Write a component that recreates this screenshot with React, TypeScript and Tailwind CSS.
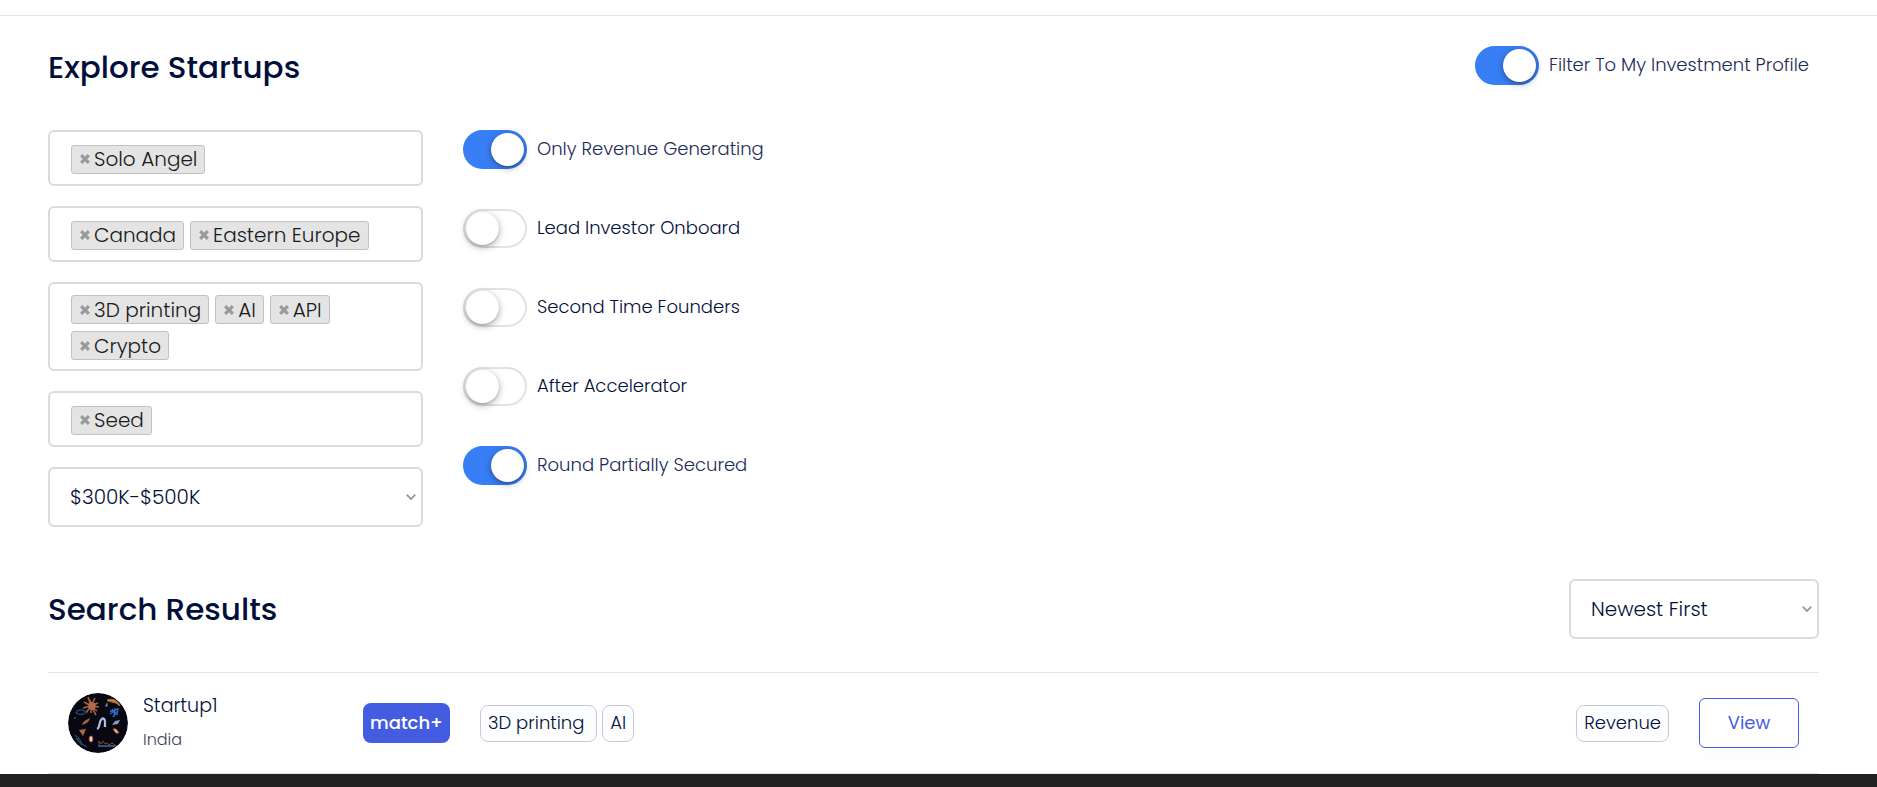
import React, { useId, useState } from "react";
import clsx from "clsx";

type Filter = { label: string; tags: string[] };

const initialFilters: Filter[] = [
  { label: "Investor type", tags: ["Solo Angel"] },
  { label: "Region", tags: ["Canada", "Eastern Europe"] },
  { label: "Industry", tags: ["3D printing", "AI", "API", "Crypto"] },
  { label: "Stage", tags: ["Seed"] },
];

const switches = [
  { label: "Only Revenue Generating", on: true },
  { label: "Lead Investor Onboard", on: false },
  { label: "Second Time Founders", on: false },
  { label: "After Accelerator", on: false },
  { label: "Round Partially Secured", on: true },
];

const startups = [
  {
    name: "Startup1",
    country: "India",
    match: "match+",
    tags: ["3D printing ", "AI"],
    status: "Revenue",
  },
];

// iOS style switch with its label
function Toggle({ label, defaultOn }: { label: string; defaultOn: boolean }) {
  const [on, setOn] = useState(defaultOn);
  const id = useId();

  return (
    <div className="flex items-center gap-2.5">
      <label
        htmlFor={id}
        className={clsx(
          "relative flex h-[39px] w-16 shrink-0 cursor-pointer items-center rounded-full border-2 transition",
          on ? "justify-end border-[#387ef5] bg-[#387ef5]" : "border-[#e2e2e4] bg-white"
        )}
      >
        <input
          id={id}
          type="checkbox"
          className="sr-only"
          checked={on}
          onChange={(e) => setOn(e.target.checked)}
        />
        <span className="mx-px size-[33px] rounded-full bg-white shadow-[0_2px_7px_rgba(0,0,0,0.35),0_1px_1px_rgba(0,0,0,0.15)]" />
      </label>
      <label
        htmlFor={id}
        className={clsx("cursor-pointer pb-0.5 text-lg font-light", on ? "text-[#1c2a58]" : "text-[#020f3a]")}
      >
        {label}
      </label>
    </div>
  );
}

function TagBox({ label, tags, onRemove }: Filter & { onRemove: (tag: string) => void }) {
  return (
    <div
      role="group"
      aria-label={label}
      className="flex min-h-14 flex-wrap content-center gap-x-1.5 gap-y-[7px] rounded-md border-2 border-[#d8dbe2] bg-white px-[21px] pt-[11px] pb-[9px]"
    >
      {tags.map((tag) => (
        <span
          key={tag}
          className="flex h-[29px] items-center gap-1 rounded-[3px] border border-[#c2c2c2] bg-[#e4e4e4] pr-[7px] pl-2 text-xl font-light text-[#1a1a1a]"
        >
          <button type="button" aria-label={`Remove ${tag}`} onClick={() => onRemove(tag)}>
            <svg viewBox="0 0 10 10" className="size-2.5" stroke="#999" strokeWidth="3.2">
              <path d="m1.2 1.2 7.6 7.6M8.8 1.2 1.2 8.8" />
            </svg>
          </button>
          {tag}
        </span>
      ))}
    </div>
  );
}

function Select({ label, options }: { label: string; options: string[] }) {
  return (
    <div className="relative">
      <select
        aria-label={label}
        className="h-15 w-full appearance-none rounded-md border-2 border-[#d8dbe2] bg-white pr-8 pl-5 text-xl font-light text-[#020f3a]"
      >
        {options.map((option) => (
          <option key={option}>{option}</option>
        ))}
      </select>
      <svg
        viewBox="0 0 10 6"
        className="pointer-events-none absolute top-1/2 right-[7px] h-1.5 w-2.5 -translate-y-1/2"
        fill="none"
        stroke="#999"
        strokeWidth="1.8"
      >
        <path d="M.7.7 5 5 9.3.7" />
      </svg>
    </div>
  );
}

function Avatar() {
  return (
    <svg viewBox="0 0 60 60" className="size-15 shrink-0 rounded-full" fill="none">
      <circle cx="30" cy="30" r="30" fill="#080812" />
      {/* coral burst */}
      <path
        d="M23 13 20 4M23 13l-1-6M23 13l4-8M23 13l7-3M23 13l8 1M23 13l6 5M23 13l5 9M23 13v7M23 13l-5 7M23 13l-8 2M23 13l-7-4"
        stroke="#a35f42"
        strokeWidth="1.6"
      />
      <path d="m20 11 3-2 4 1 1 4-3 3-4-1z" fill="#b06a48" />
      <path d="M8 20c2-4 7-4 10-1-3 3-7 3-10 1z" stroke="#24466f" strokeWidth="1.3" />
      <path d="M39 7c5-2 11 0 13 6l-4-3-8-2z" fill="#c9803f" stroke="#b56c33" />
      <path d="m37 13 2-4 1 4-2 1z" fill="#6676a0" />
      <path d="m42 18 6 1-3 5M42 21l7-5M47 15l-1 9M44 16l4 6M50 15l-1 7" stroke="#2b6fc0" strokeWidth="1.4" />
      {/* horseshoe */}
      <path d="M29 36c3-1 2-7 4-9 2-3 4-1 4 2v5" stroke="#b0c0e6" strokeWidth="2.2" />
      <path d="M14 32c1-4 4-5 8-7-1 4-4 6-8 7z" fill="#a5603c" />
      <path d="m44 32 3-4 5-1-2 4z" fill="#8c9cbd" />
      <path d="m45 36 3 0 3 4-3 0z" fill="#f0c3a0" stroke="#b0623c" />
      <path d="m11 37 7-1-3 7z" fill="#a66c48" />
      <ellipse cx="23" cy="46" rx="1.8" ry="3" fill="#f2d0b4" stroke="#a8643f" />
      <path d="m7 42 5 5 2 4 5 3M8 45l6 7" stroke="#2c4668" strokeWidth="1.2" />
      <path d="M30 53h18" stroke="#3a5070" strokeWidth="2" />
      <path d="M31 52v-4l2 3 2-3 2 3 2-1 2 2 3-2 3 2" stroke="#7a4a38" />
      <circle cx="7" cy="25" r=".9" fill="#4a5a78" />
    </svg>
  );
}

function Tag({ children }: { children: React.ReactNode }) {
  return (
    <span className="flex h-[37px] items-center rounded-lg border border-[#c8c9d6] bg-[#fcfdff] px-[7px] text-lg font-light whitespace-pre text-[#020f3a]">
      {children}
    </span>
  );
}

export default function App() {
  const [filters, setFilters] = useState(initialFilters);

  const removeTag = (label: string, tag: string) =>
    setFilters((prev) =>
      prev.map((f) => (f.label === label ? { ...f, tags: f.tags.filter((t) => t !== tag) } : f))
    );

  return (
    <div className="flex min-h-screen flex-col bg-white font-[Poppins,Inter,sans-serif] text-[#020f3a]">
      <header className="h-4 border-b border-[#e2e3f3]" />

      <main className="pr-[58px] pl-12">
        <div className="flex items-start justify-between pt-[30px] pr-2.5">
          <h1 className="text-[31px] leading-[42px] font-medium">Explore Startups</h1>
          <Toggle label="Filter To My Investment Profile" defaultOn />
        </div>

        <div className="mt-[42px] flex items-start gap-10">
          <div className="flex w-[375px] flex-col gap-5">
            {filters.map((f) => (
              <TagBox key={f.label} {...f} onRemove={(tag) => removeTag(f.label, tag)} />
            ))}
            <Select
              label="Round size"
              options={["$300K-$500K", "$500K-$1M", "$1M-$3M"]}
            />
          </div>
          <div className="flex flex-col gap-10">
            {switches.map((s) => (
              <Toggle key={s.label} label={s.label} defaultOn={s.on} />
            ))}
          </div>
        </div>

        <section className="mt-13">
          <div className="flex items-center justify-between pb-[33px]">
            <h2 className="text-[31px] leading-[42px] font-medium">Search Results</h2>
            <div className="w-[250px]">
              <Select label="Sort by" options={["Newest First", "Oldest First"]} />
            </div>
          </div>

          <ul className="border-t border-[#e2e3f3]">
            {startups.map((s) => (
              <li key={s.name} className="flex items-center border-b border-[#e2e3f3] px-5 py-4">
                <Avatar />
                <div className="ml-[15px] w-[220px]">
                  <p className="text-[19px] leading-[34px] font-light">{s.name}</p>
                  <p className="text-base leading-[34px] font-light text-[#3d4358]">{s.country}</p>
                </div>
                <span className="flex h-10 items-center rounded-lg bg-[#445ce0] px-[7px] text-lg font-medium text-white">
                  {s.match}
                </span>
                <div className="ml-[30px] flex gap-[5px]">
                  {s.tags.map((t) => (
                    <Tag key={t}>{t}</Tag>
                  ))}
                </div>
                <div className="ml-auto flex items-center gap-[30px]">
                  <Tag>{s.status}</Tag>
                  <button
                    type="button"
                    className="h-[50px] w-[100px] rounded-md border border-[#445ce0] bg-white text-lg text-[#445ce0] shadow-[0_10px_20px_rgba(68,92,224,0.02)]"
                  >
                    View
                  </button>
                </div>
              </li>
            ))}
          </ul>
        </section>
      </main>

      <footer className="min-h-3 flex-1 bg-[#222]" />
    </div>
  );
}
